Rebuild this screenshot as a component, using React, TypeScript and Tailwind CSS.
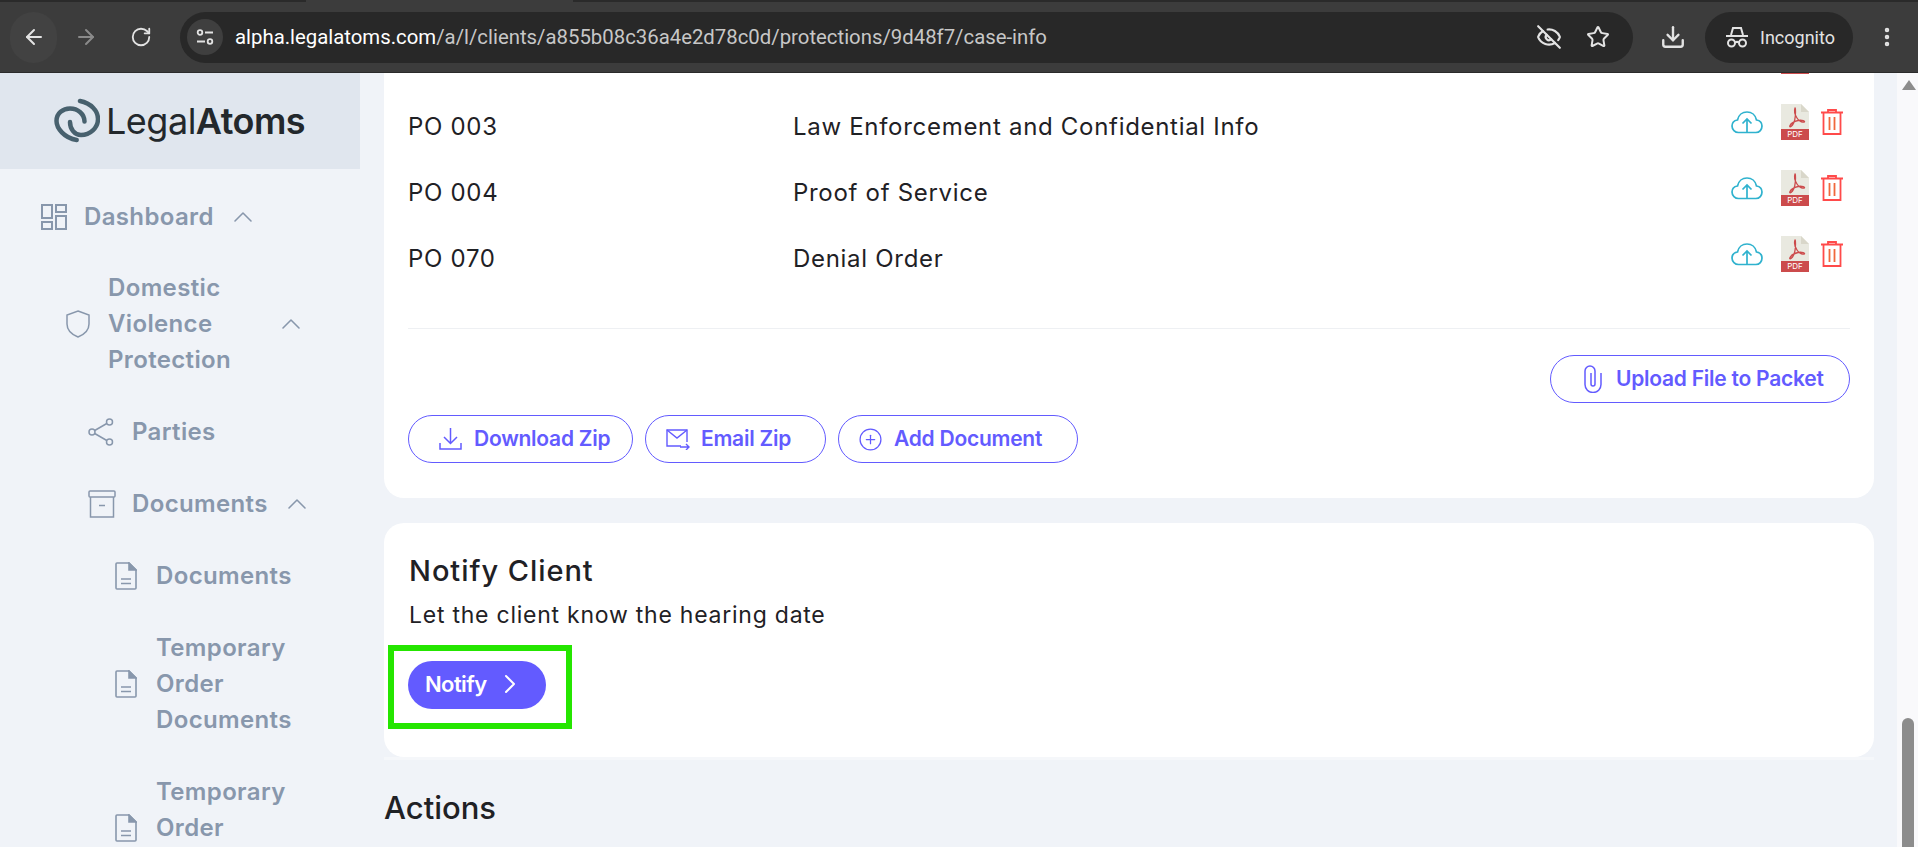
import { ChevronRight, ChevronUp, Download, EllipsisVertical, EyeOff, Star, ArrowLeft, ArrowRight, RotateCw, CirclePlus } from "lucide-react";

function LogoMark() {
  return (
    <svg viewBox="9 8 46 46" className="w-[46px] h-[46px]" fill="none" stroke="#48616e" strokeWidth="4.500" strokeLinecap="round">
      <path d="M31.700 50C19 48 11.500 38 11.500 31C11.500 23 18 18.500 25 18.500C33 18.500 39.500 24 39.500 31.500" />
      <path d="M35 11C46 13 53 21 53 29C53 38 45 45 36 45C29.500 45 25 39 25 32" />
    </svg>
  );
}

function DashIcon() {
  return (
    <svg viewBox="0 0 26 26" className="w-[26px] h-[26px] shrink-0" fill="none" stroke="currentColor" strokeWidth="2">
      <rect x="1" y="1" width="10" height="13" />
      <rect x="15" y="1" width="10" height="7" />
      <rect x="1" y="18" width="10" height="7" />
      <rect x="15" y="12" width="10" height="13" />
    </svg>
  );
}

function ShieldIcon() {
  return (
    <svg viewBox="0 0 24 28" className="w-[24px] h-[28px] shrink-0" fill="none" stroke="currentColor" strokeWidth="1.500">
      <path d="M12 1L23 5V14C23 21 17 25 12 27C7 25 1 21 1 14V5Z" />
    </svg>
  );
}

function ShareIcon() {
  return (
    <svg viewBox="0 0 26 28" className="w-[26px] h-[28px] shrink-0" fill="none" stroke="currentColor" strokeWidth="1.500">
      <circle cx="21.500" cy="4" r="3" />
      <circle cx="4" cy="14" r="3" />
      <circle cx="21.500" cy="24" r="3" />
      <path d="M18.800 5.500L6.700 12.500M6.700 15.500L18.800 22.500" />
    </svg>
  );
}

function ArchiveIcon() {
  return (
    <svg viewBox="0 0 28 28" className="w-[28px] h-[28px] shrink-0" fill="none" stroke="currentColor" strokeWidth="1.500">
      <rect x="1" y="1" width="26" height="6" rx="1" />
      <path d="M2.500 7V27H25.500V7M11 15.500h6" />
    </svg>
  );
}

function DocIcon() {
  return (
    <svg viewBox="0 0 22 28" className="w-[22px] h-[28px] shrink-0" fill="none" stroke="currentColor" strokeWidth="1.600">
      <path d="M1 2a1 1 0 0 1 1-1h12l7 7v18a1 1 0 0 1-1 1H2a1 1 0 0 1-1-1z" />
      <path d="M14 1l7 7h-7z" fill="currentColor" />
      <path d="M6 17h10M6 21.500h10" />
    </svg>
  );
}

function CloudIcon() {
  return (
    <svg viewBox="0 0 32 23" className="w-[32px] h-[23px]" fill="none" stroke="#2fb2ce" strokeWidth="1.700">
      <path d="M16 21.500H7.500C4 21.500 1 18.500 1 15C1 11.500 3.500 9.500 6.500 9C7.500 4 11.500 1 16 1C20.500 1 24.500 4 25.500 9C28.500 9.500 31 11.500 31 15C31 18.500 28.500 21.500 25 21.500H16" />
      <path d="M16 22V8M11.500 12.500L16 8L20.500 12.500" />
    </svg>
  );
}

function PdfIcon() {
  return (
    <svg viewBox="0 0 28 36" className="w-[28px] h-[36px]">
      <path d="M0 0h20l8 8v28H0z" fill="#e9e9e0" />
      <path d="M20 0l8 8h-8z" fill="#d9d7ca" />
      <rect y="25" width="28" height="11" fill="#cc4b4c" />
      <path d="M14 4c-1 3 0 7 2 10s5 4.500 7 4-2-2.500-6-1.500-7 3-8 5 1 1.500 2.500-.5 3-8 3-13-.5-4-.5-4z" fill="none" stroke="#cc4b4c" strokeWidth="1.300" />
    </svg>
  );
}

function PdfBadge() {
  return (
    <div className="relative w-[28px] h-[36px]">
      <PdfIcon />
      <span className="absolute left-0 right-0 bottom-0 h-[11px] text-center text-[8px] leading-[11px] text-white">PDF</span>
    </div>
  );
}

function TrashIcon() {
  return (
    <svg viewBox="0 0 22 26" className="w-[22px] h-[26px]" fill="none" stroke="#ff4a4a" strokeWidth="1.800">
      <path d="M0 3.500h22M7 3V1h8v2" />
      <path d="M2.500 4v21h17V4" />
      <path d="M8.500 8v13M13.500 8v13" stroke="#f0683c" />
    </svg>
  );
}

function TrayIcon() {
  return (
    <svg viewBox="0 0 23 22" className="w-[23px] h-[22px]" fill="none" stroke="currentColor" strokeWidth="1.500">
      <path d="M11.500 0V15M5 9l6.500 6.500L18 9M1 15v6h21v-6" />
    </svg>
  );
}

function EmailIcon() {
  return (
    <svg viewBox="0 0 24 22" className="w-[24px] h-[22px]" fill="none" stroke="currentColor" strokeWidth="1.400">
      <path d="M15 18H1V2h20v12" />
      <path d="M1 2l10 8 10-8" />
      <path d="M14 19h9M20 16l3 3-3 3" />
    </svg>
  );
}

function ClipIcon() {
  return (
    <svg viewBox="0 0 18 28" className="w-[18px] h-[28px]" fill="none" stroke="currentColor" strokeWidth="1.500">
      <path d="M17 8V19.500a8 8 0 0 1-16 0V6a5 5 0 0 1 10 0V19a2 2 0 0 1-4 0V8" />
    </svg>
  );
}

function IncognitoIcon() {
  return (
    <svg viewBox="0 0 24 24" className="w-[24px] h-[24px]" fill="none" stroke="#e3e3e3" strokeWidth="2">
      <path d="M1 11h22" />
      <path d="M6 10l2-7h8l2 7" />
      <circle cx="6.500" cy="18" r="3.500" />
      <circle cx="17.500" cy="18" r="3.500" />
      <path d="M10 17.500c1.300-.8 2.700-.8 4 0" />
    </svg>
  );
}

function TuneIcon() {
  return (
    <svg viewBox="0 0 18 18" className="w-[18px] h-[18px]" fill="none" stroke="#e3e3e3" strokeWidth="1.800">
      <circle cx="4" cy="4.500" r="2.300" />
      <path d="M9 4.500h8M1 13.500h8" />
      <circle cx="14" cy="13.500" r="2.300" />
    </svg>
  );
}

function DocRow({ code, title }: { code: string; title: string }) {
  return (
    <div className="flex items-center h-[66px] pr-[7px]">
      <p className="w-[385px] text-[24px] tracking-[0.7px] text-[#1f2125]">{code}</p>
      <p className="flex-1 text-[24px] tracking-[0.7px] text-[#1f2125]">{title}</p>
      <div className="flex items-center">
        <div className="mr-[18px] mt-[-10px]"><CloudIcon /></div>
        <div className="mr-[12px] mt-[-10px]"><PdfBadge /></div>
        <div className="mt-[-10px]"><TrashIcon /></div>
      </div>
    </div>
  );
}

function NavText({ children }: { children: React.ReactNode }) {
  return <span className="text-[24px] leading-[36px] font-semibold tracking-[0.35px]">{children}</span>;
}

const outlineBtn = "h-[48px] rounded-full border border-[#635bff] text-[#635bff] text-[21px] font-semibold tracking-[-0.25px] flex items-center";

export default function App() {
  return (
    <div className="h-[847px] overflow-hidden flex flex-col bg-[#f0f3f8] font-['Inter',sans-serif]">
      {/* browser bar */}
      <div className="h-[73px] shrink-0 bg-[#3c3c3c] border-t-2 border-b border-t-[#2a2a2a] border-b-[#2b2b2b] flex items-center text-[#e3e3e3] relative">
        <div className="absolute top-[-2px] left-[306px] w-[267px] h-[2px] bg-[#3c3c3c]" />
        <div className="w-[47px] h-[51px] ml-[10px] rounded-full bg-[#424242] flex items-center justify-center">
          <ArrowLeft className="w-[24px] h-[24px]" strokeWidth={2} />
        </div>
        <ArrowRight className="w-[24px] h-[24px] ml-[17px] text-[#8a8a8a]" strokeWidth={2} />
        <RotateCw className="w-[22px] h-[22px] ml-[32px]" strokeWidth={2} />
        <div className="w-[1453px] h-[51px] ml-[28px] rounded-full bg-[#282828] flex items-center pl-[7px] pr-[23px]">
          <div className="w-[36px] h-[36px] rounded-full bg-[#3f3f3f] flex items-center justify-center"><TuneIcon /></div>
          <p className="ml-[12px] flex-1 text-[20.35px] font-['Roboto',sans-serif] text-[#c7c7c7] whitespace-nowrap">
            <span className="text-white">alpha.legalatoms.com</span>/a/l/clients/a855b08c36a4e2d78c0d/protections/9d48f7/case-info
          </p>
          <EyeOff className="w-[26px] h-[26px] mr-[24px]" strokeWidth={2} />
          <Star className="w-[24px] h-[24px]" strokeWidth={2} />
        </div>
        <Download className="w-[26px] h-[26px] ml-[27px]" strokeWidth={2.200} />
        <div className="w-[148px] h-[51px] ml-[19px] rounded-full bg-[#282828] flex items-center pl-[20px]">
          <IncognitoIcon />
          <span className="ml-[11px] text-[18px] font-['Roboto',sans-serif]">Incognito</span>
        </div>
        <EllipsisVertical className="w-[24px] h-[24px] ml-[22px]" strokeWidth={2.500} />
      </div>

      <div className="flex flex-1 min-h-0">
        {/* sidebar */}
        <aside className="w-[360px] shrink-0 text-[#8897ac] overflow-hidden">
          <div className="h-[96px] bg-[#e0e6ee] flex items-center pl-[54px]">
            <LogoMark />
            <span className="ml-[6px] text-[36px] text-[#23282c] tracking-[-0.5px]">Legal<span className="font-semibold">Atoms</span></span>
          </div>
          <nav className="flex flex-col">
            <div className="flex items-center pl-[41px] mt-[30px] h-[36px]">
              <DashIcon />
              <span className="ml-[17px]"><NavText>Dashboard</NavText></span>
              <ChevronUp className="w-[32px] h-[32px] ml-[13px]" strokeWidth={1.200} />
            </div>
            <div className="flex items-center pl-[66px] mt-[35px]">
              <ShieldIcon />
              <span className="ml-[18px] w-[142px]"><NavText>Domestic Violence Protection</NavText></span>
              <ChevronUp className="w-[32px] h-[32px] ml-[25px]" strokeWidth={1.200} />
            </div>
            <div className="flex items-center pl-[88px] mt-[36px] h-[36px]">
              <ShareIcon />
              <span className="ml-[18px]"><NavText>Parties</NavText></span>
            </div>
            <div className="flex items-center pl-[88px] mt-[36px] h-[36px]">
              <ArchiveIcon />
              <span className="ml-[16px]"><NavText>Documents</NavText></span>
              <ChevronUp className="w-[32px] h-[32px] ml-[13px]" strokeWidth={1.200} />
            </div>
            <div className="flex items-center pl-[115px] mt-[36px] h-[36px]">
              <DocIcon />
              <span className="ml-[19px]"><NavText>Documents</NavText></span>
            </div>
            <div className="flex items-center pl-[115px] mt-[36px]">
              <DocIcon />
              <span className="ml-[19px] w-[140px]"><NavText>Temporary Order Documents</NavText></span>
            </div>
            <div className="flex items-center pl-[115px] mt-[36px]">
              <DocIcon />
              <span className="ml-[19px] w-[140px]"><NavText>Temporary Order Documents</NavText></span>
            </div>
          </nav>
        </aside>

        {/* main */}
        <main className="flex-1 min-w-0 pl-[24px] pr-[23px] overflow-hidden">
          <section className="bg-white rounded-b-[20px] px-[24px] mt-[-45px] h-[470px]">
            <DocRow code="" title="" />
            <DocRow code="PO 003" title="Law Enforcement and Confidential Info" />
            <DocRow code="PO 004" title="Proof of Service" />
            <DocRow code="PO 070" title="Denial Order" />
            <div className="h-px bg-[#eef0f3] mt-[36px]" />
            <div className="flex justify-end mt-[26px]">
              <button className={`${outlineBtn} w-[300px] pl-[33px] gap-[14px]`}>
                <ClipIcon />
                Upload File to Packet
              </button>
            </div>
            <div className="flex gap-[12px] mt-[12px]">
              <button className={`${outlineBtn} w-[225px] pl-[30px] gap-[12px]`}>
                <TrayIcon />
                Download Zip
              </button>
              <button className={`${outlineBtn} w-[181px] pl-[20px] gap-[11px]`}>
                <EmailIcon />
                Email Zip
              </button>
              <button className={`${outlineBtn} w-[240px] pl-[19px] gap-[11px]`}>
                <CirclePlus className="w-[25px] h-[25px]" strokeWidth={1.200} />
                Add Document
              </button>
            </div>
          </section>

          <section className="bg-white rounded-[20px] mt-[25px] h-[234px] pl-[25px] pt-[28px]">
            <h2 className="text-[29px] leading-[40px] font-[450] tracking-[0.95px] text-[#1f2125]">Notify Client</h2>
            <p className="mt-[6px] text-[23px] leading-[36px] tracking-[0.76px] text-[#1f2125]">Let the client know the hearing date</p>
            <div className="mt-[12px] ml-[-21px] w-[184px] h-[84px] border-[6px] border-[#25e600] pl-[14px] pt-[10px]">
              <button className="h-[48px] w-[138px] rounded-full bg-[#635bff] text-white text-[22px] font-semibold tracking-[-0.6px] flex items-center pl-[17px] pb-[2px]">
                Notify
                <ChevronRight className="w-[32px] h-[32px] ml-[7px]" strokeWidth={1.500} />
              </button>
            </div>
          </section>
          <div className="h-[3px] bg-[#f5f7fa]" />

          <h2 className="mt-[28px] text-[31px] leading-[40px] font-medium text-[#1f2125]">Actions</h2>
        </main>

        {/* scrollbar */}
        <div className="w-[21px] shrink-0 bg-[#f9f9fb] relative">
          <div className="absolute left-[5px] top-[7px] w-0 h-0 border-x-[7px] border-x-transparent border-b-[10px] border-b-[#8c8c8c]" />
          <div className="absolute left-[5px] top-[645px] w-[12px] h-[140px] rounded-t-full bg-[#8c8c8c]" />
        </div>
      </div>
    </div>
  );
}
